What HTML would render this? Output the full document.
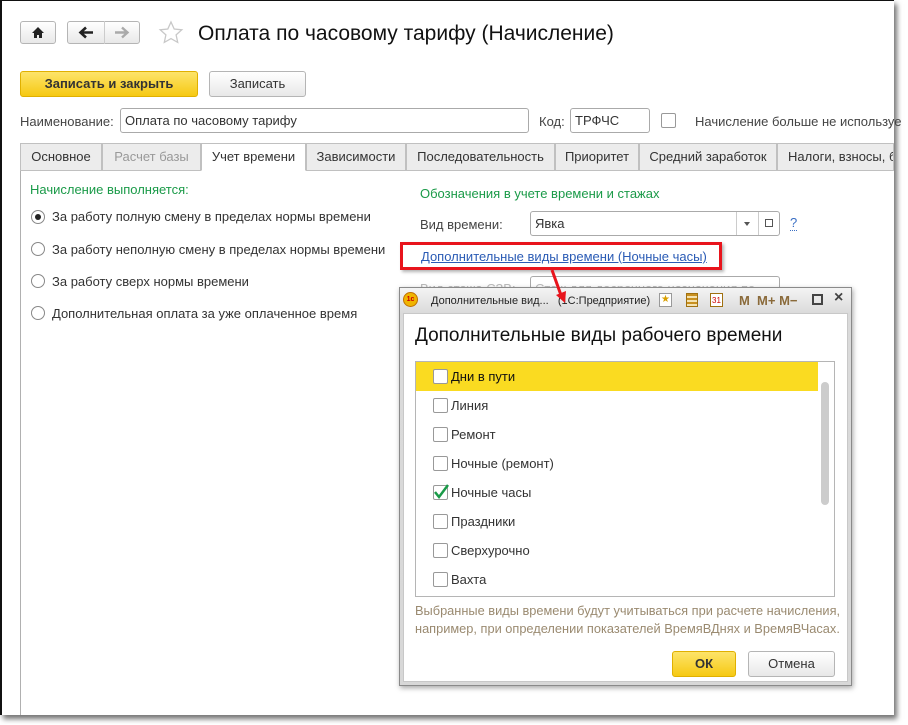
<!DOCTYPE html>
<html><head><meta charset="utf-8"><style>
*{box-sizing:border-box;margin:0;padding:0}
body{width:908px;height:725px;background:#fff;position:relative;overflow:hidden;font-family:"Liberation Sans",Arial,sans-serif;font-size:13px;color:#333}
.a{position:absolute}
.page{left:0;top:0;width:894px;height:715px;border-left:2px solid #111;border-top:1px solid #111;background:#fff;box-shadow:3px 4px 5px rgba(0,0,0,.55)}
.btn{border:1px solid #b5b5b5;border-radius:3px;background:linear-gradient(#fff,#e8e8e8);text-align:center}
.ybtn{border:1px solid #e0b000;border-radius:3px;background:linear-gradient(#fde46a,#f6c913);text-align:center;font-weight:bold;color:#333}
.inp{border:1px solid #aaa;border-radius:3px;background:#fff;padding-left:4px}
.tab{top:143px;height:28px;border:1px solid #c0c0c0;background:#ececec;line-height:26px;text-align:center;color:#333}
.radio{width:14px;height:14px;border:1px solid #888;border-radius:50%;background:#fff}
.cb{width:15px;height:15px;border:1px solid #999;border-radius:2px;background:#fff}
</style></head><body>
<div class="a page"></div>
<!-- nav -->
<div class="a btn" style="left:20px;top:21px;width:36px;height:23px"></div>
<svg class="a" style="left:31px;top:26px" width="14" height="13"><path d="M7 1L1 7h2v5h3V9h2v3h3V7h2z" fill="#222"/></svg>
<div class="a btn" style="left:67px;top:21px;width:73px;height:23px"></div>
<div class="a" style="left:104px;top:21px;width:1px;height:23px;background:#ccc"></div>
<svg class="a" style="left:78px;top:26px" width="16" height="13"><path d="M15 6.5H4M8 1.5L2.5 6.5 8 11.5" fill="none" stroke="#222" stroke-width="2.6"/></svg>
<svg class="a" style="left:114px;top:26px" width="16" height="13"><path d="M1 6.5h11M8 1.5l5.5 5L8 11.5" fill="none" stroke="#aaa" stroke-width="2.4"/></svg>
<svg class="a" style="left:158px;top:20px" width="26" height="26"><path d="M13 2l3.2 7 7.6.8-5.7 5.1 1.6 7.5L13 18.6l-6.7 3.8 1.6-7.5L2.2 9.8l7.6-.8z" fill="none" stroke="#c8c8c8" stroke-width="1.3"/></svg>
<div class="a" style="left:198px;top:22px;font-size:21px;color:#111">Оплата по часовому тарифу (Начисление)</div>
<!-- buttons -->
<div class="a ybtn" style="left:20px;top:71px;width:178px;height:26px;line-height:24px">Записать и закрыть</div>
<div class="a btn" style="left:209px;top:71px;width:97px;height:26px;line-height:24px">Записать</div>
<div class="a" style="left:20px;top:114px;color:#444">Наименование:</div>
<div class="a inp" style="left:120px;top:108px;width:409px;height:25px;line-height:23px">Оплата по часовому тарифу</div>
<div class="a" style="left:539px;top:114px;color:#444">Код:</div>
<div class="a inp" style="left:570px;top:108px;width:80px;height:25px;line-height:23px">ТРФЧС</div>
<div class="a cb" style="left:661px;top:113px"></div>
<div class="a" style="left:695px;top:114px;color:#444;white-space:nowrap">Начисление больше не используе</div>
<!-- tabs -->
<div class="a" style="left:20px;top:170px;width:874px;height:545px;border-left:1px solid #b0b0b0;border-top:1px solid #c0c0c0"></div>
<div class="a tab" style="left:20px;width:82px">Основное</div>
<div class="a tab" style="left:102px;width:99px;color:#999">Расчет базы</div>
<div class="a tab" style="left:201px;width:105px;background:#fff;border-bottom-color:#fff">Учет времени</div>
<div class="a tab" style="left:306px;width:100px">Зависимости</div>
<div class="a tab" style="left:406px;width:149px">Последовательность</div>
<div class="a tab" style="left:555px;width:84px">Приоритет</div>
<div class="a tab" style="left:639px;width:138px">Средний заработок</div>
<div class="a tab" style="left:777px;width:117px;text-align:left;padding-left:10px;white-space:nowrap;overflow:hidden">Налоги, взносы, бу</div>
<!-- left content -->
<div class="a" style="left:30px;top:182px;color:#1a9a48">Начисление выполняется:</div>
<div class="a radio" style="left:31px;top:210px"></div><div class="a" style="left:35px;top:214px;width:6px;height:6px;border-radius:50%;background:#222"></div>
<div class="a" style="left:52px;top:209px">За работу полную смену в пределах нормы времени</div>
<div class="a radio" style="left:31px;top:242px"></div><div class="a" style="left:52px;top:242px">За работу неполную смену в пределах нормы времени</div>
<div class="a radio" style="left:31px;top:274px"></div><div class="a" style="left:52px;top:274px">За работу сверх нормы времени</div>
<div class="a radio" style="left:31px;top:306px"></div><div class="a" style="left:52px;top:306px">Дополнительная оплата за уже оплаченное время</div>
<!-- right content -->
<div class="a" style="left:420px;top:186px;color:#1a9a48">Обозначения в учете времени и стажах</div>
<div class="a" style="left:420px;top:217px;color:#444">Вид времени:</div>
<div class="a inp" style="left:530px;top:211px;width:250px;height:25px;line-height:23px">Явка</div>
<div class="a" style="left:736px;top:212px;width:1px;height:23px;background:#ccc"></div>
<div class="a" style="left:758px;top:212px;width:1px;height:23px;background:#ccc"></div>
<div class="a" style="left:744px;top:222px;border:3px solid transparent;border-top:4px solid #555"></div>
<div class="a" style="left:765px;top:219px;width:8px;height:8px;border:1px solid #555"></div>
<div class="a" style="left:790px;top:215px;color:#3a6fc4;border-bottom:1px dotted #3a6fc4;line-height:15px">?</div>
<div class="a" style="left:400px;top:242px;width:322px;height:28px;border:3px solid #e8141c;box-shadow:2px 2px 3px rgba(0,0,0,.3)"></div>
<div class="a" style="left:421px;top:249px;color:#2a5bb5;text-decoration:underline">Дополнительные виды времени (Ночные часы)</div>
<div class="a" style="left:420px;top:281px;color:#bbb">Вид стажа СЗВ:</div>
<div class="a inp" style="left:530px;top:276px;width:250px;height:14px;border-bottom:none;color:#bbb;overflow:hidden;line-height:23px">Стаж для досрочного назначения пе</div>
<!-- dialog -->
<div class="a" style="left:399px;top:287px;width:453px;height:399px;border:1px solid #8a8a8a;background:linear-gradient(#f4f4f4,#dadada 26px,#d8d8d8);box-shadow:1px 2px 5px rgba(0,0,0,.35)"></div>
<div class="a" style="left:403px;top:292px;width:15px;height:15px;border-radius:50%;background:#f0b400;border:1px solid #c07000;font-size:7px;color:#c00;text-align:center;line-height:13px;font-weight:bold">1c</div>
<div class="a" style="left:431px;top:295px;font-size:11px;color:#222;white-space:nowrap">Дополнительные вид...&nbsp;&nbsp;&nbsp;(1С:Предприятие)</div>
<div class="a" style="left:659px;top:293px;width:13px;height:14px;border:1px solid #999;background:#fff;font-size:10px;line-height:12px;text-align:center;color:#d9a000">★</div>
<div class="a" style="left:686px;top:293px;width:12px;height:14px;background:repeating-linear-gradient(#c89020 0 2px,#f4e2b0 2px 4px);border:1px solid #a07010"></div>
<div class="a" style="left:710px;top:293px;width:13px;height:14px;border:1px solid #a07010;background:#fff;font-size:8px;color:#c00;line-height:14px;text-align:center">31</div>
<div class="a" style="left:739px;top:293px;font-size:13px;font-weight:bold;color:#8a6a3a;white-space:nowrap">M&nbsp;&nbsp;M+&nbsp;M−</div>
<div class="a" style="left:812px;top:294px;width:11px;height:11px;border:2px solid #444"></div>
<div class="a" style="left:834px;top:289px;font-size:16px;color:#444;font-weight:bold">×</div>
<div class="a" style="left:403px;top:313px;width:445px;height:369px;background:#fff;border:1px solid #c8c8c8"></div>
<div class="a" style="left:415px;top:325px;font-size:19px;color:#111">Дополнительные виды рабочего времени</div>
<div class="a" style="left:415px;top:361px;width:420px;height:236px;border:1px solid #b5b5b5"></div>
<div class="a" style="left:416px;top:362px;width:402px;height:29px;background:#fadb21"></div>
<div class="a" style="left:821px;top:382px;width:8px;height:123px;border-radius:4px;background:#ccc"></div>
<div class="a cb" style="left:433px;top:369px"></div><div class="a" style="left:451px;top:369px;color:#111">Дни в пути</div>
<div class="a cb" style="left:433px;top:398px"></div><div class="a" style="left:451px;top:398px">Линия</div>
<div class="a cb" style="left:433px;top:427px"></div><div class="a" style="left:451px;top:427px">Ремонт</div>
<div class="a cb" style="left:433px;top:456px"></div><div class="a" style="left:451px;top:456px">Ночные (ремонт)</div>
<div class="a cb" style="left:433px;top:485px"></div><svg class="a" style="left:432px;top:482px" width="18" height="18"><path d="M3 10l4 5L16 3" fill="none" stroke="#1a9a48" stroke-width="2.5"/></svg><div class="a" style="left:451px;top:485px">Ночные часы</div>
<div class="a cb" style="left:433px;top:514px"></div><div class="a" style="left:451px;top:514px">Праздники</div>
<div class="a cb" style="left:433px;top:543px"></div><div class="a" style="left:451px;top:543px">Сверхурочно</div>
<div class="a cb" style="left:433px;top:572px"></div><div class="a" style="left:451px;top:572px">Вахта</div>
<div class="a" style="left:415px;top:602px;color:#9a8a70;font-size:12.8px;line-height:18px;width:440px;white-space:nowrap">Выбранные виды времени будут учитываться при расчете начисления,<br>например, при определении показателей ВремяВДнях и ВремяВЧасах.</div>
<div class="a ybtn" style="left:672px;top:651px;width:64px;height:26px;line-height:24px">ОК</div>
<div class="a btn" style="left:748px;top:651px;width:87px;height:26px;line-height:24px">Отмена</div>
<!-- arrow -->
<svg class="a" style="left:545px;top:268px" width="25" height="40"><path d="M7 2L17 30" stroke="#e8141c" stroke-width="3"/><path d="M11 27l9 8 1-12z" fill="#e8141c"/></svg>
</body></html>
